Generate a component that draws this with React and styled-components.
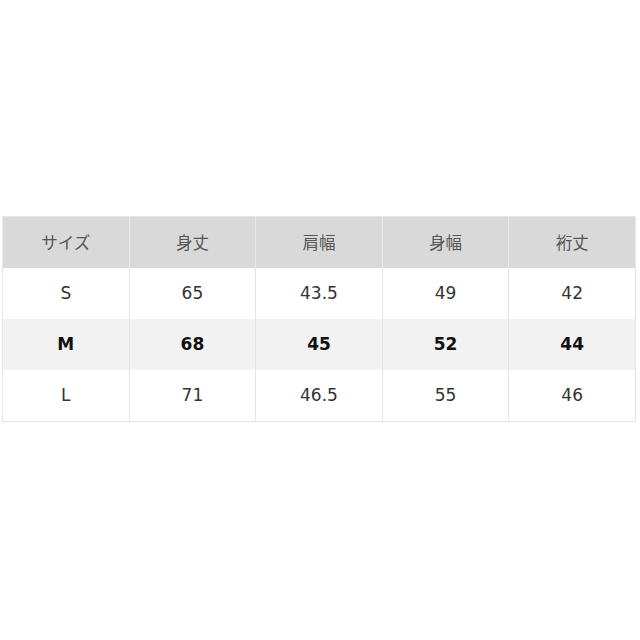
import React from 'react'
import styled, { createGlobalStyle } from 'styled-components'

const GlobalStyle = createGlobalStyle`
	html, body {
		margin: 0;
		padding: 0;
		background: #ffffff;
	}
	body {
		font-family: "DejaVu Sans", Verdana, "Noto Sans CJK JP", sans-serif;
	}
`

const Page = styled.div`
	width: 640px;
	height: 640px;
	display: flex;
	align-items: center;
	padding: 0 4px 2px 2px;
	box-sizing: border-box;
`

const SizeTable = styled.table`
	width: 100%;
	border-collapse: collapse;
	table-layout: fixed;
	border: 1px solid #e4e4e4;
`

const HeadCell = styled.th`
	height: 51px;
	padding: 0 0 2px;
	background: #d9d9d9;
	border-left: 1px solid #e9e9e9;
	border-right: 1px solid #e9e9e9;
	color: #555555;
	font-family: "Noto Sans CJK JP", sans-serif;
	font-weight: 400;
	font-size: 16.5px;
	text-align: center;
	vertical-align: middle;
	box-sizing: border-box;
`

const Row = styled.tr`
	background: ${p => (p.$highlight ? '#f2f2f2' : '#ffffff')};
`

const Cell = styled.td`
	height: 51px;
	padding: 0;
	border-left: 1px solid #e4e4e4;
	border-right: 1px solid #e4e4e4;
	color: ${p => (p.$bold ? '#111111' : '#333333')};
	font-weight: ${p => (p.$bold ? 700 : 400)};
	font-size: 17px;
	text-align: center;
	vertical-align: middle;
`

const headers = ['サイズ', '身丈', '肩幅', '身幅', '裄丈']
const rows = [
	{ size: 'S', values: ['65', '43.5', '49', '42'] },
	{ size: 'M', values: ['68', '45', '52', '44'], highlight: true },
	{ size: 'L', values: ['71', '46.5', '55', '46'] },
]

export default function App() {
	return (
		<Page>
			<GlobalStyle />
			<SizeTable>
				<thead>
					<tr>
						{headers.map(h => <HeadCell key={h}>{h}</HeadCell>)}
					</tr>
				</thead>
				<tbody>
					{rows.map(r => (
						<Row key={r.size} $highlight={r.highlight}>
							<Cell $bold={r.highlight}>{r.size}</Cell>
							{r.values.map((v, i) => (
								<Cell key={i} $bold={r.highlight}>{v}</Cell>
							))}
						</Row>
					))}
				</tbody>
			</SizeTable>
		</Page>
	)
}
